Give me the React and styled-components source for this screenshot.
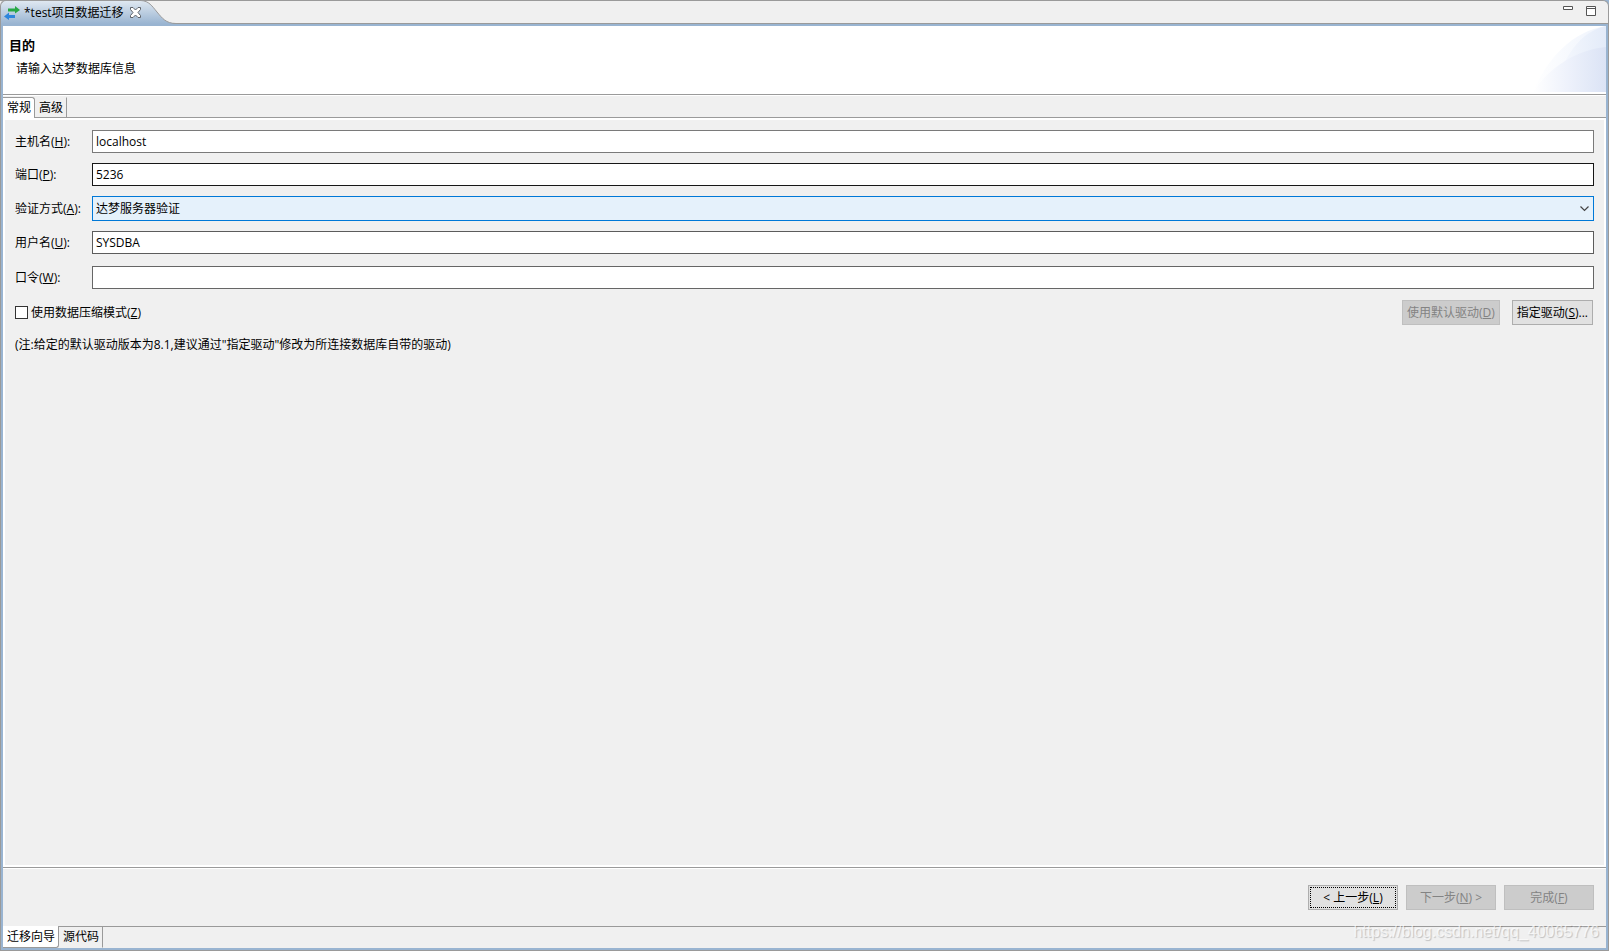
import React, { useState } from "react";
import styled, { createGlobalStyle } from "styled-components";

const GlobalStyle = createGlobalStyle`
  * {
    box-sizing: border-box;
  }
  body {
    margin: 0;
    background-color: #f0f0f0;
  }
  body, button, input, select {
    font-family: "Open Sans", "Noto Sans CJK SC", sans-serif;
    font-size: 12px;
    line-height: 16px;
    color: #000000;
  }
`;

function TransferIcon() {
  return (
    <svg width="16" height="16" viewBox="0 0 16 16" aria-hidden="true">
      <path d="M4 3.5H11V1L16 5L11 8.5V6.5H4Z" fill="#27a844" />
      <path d="M11 10H5V7.5L0 11.5L5 15V13H11Z" fill="#2e86dc" />
    </svg>
  );
}

function CloseIcon() {
  return (
    <svg width="11" height="11" viewBox="0 0 11 11" aria-hidden="true">
      <path
        d="M0.5 0.5H3L5.5 3L8 0.5H10.5V2.5L8 5.5L10.5 8.5V10.5H8L5.5 8L3 10.5H0.5V8.5L3 5.5L0.5 2.5Z"
        fill="#ffffff"
        stroke="#5f6369"
      />
    </svg>
  );
}

function TabCurve() {
  return (
    <svg width="35" height="24" viewBox="0 0 35 24" aria-hidden="true">
      <defs>
        <linearGradient id="tabFill" x1="0" y1="0" x2="0" y2="1">
          <stop offset="0" stopColor="#dfe8f1" />
          <stop offset="1" stopColor="#99b4d1" />
        </linearGradient>
      </defs>
      <path d="M0 0.5C8 1 11 6 16 12C21 18 25 23.5 35 23.5V24H0Z" fill="url(#tabFill)" />
      <path d="M0 0.5C8 1 11 6 16 12C21 18 25 23.5 35 23.5" fill="none" stroke="#9a9a9a" />
    </svg>
  );
}

function BannerArt() {
  return (
    <svg width="75" height="66" viewBox="0 0 75 66" aria-hidden="true">
      <defs>
        <linearGradient id="artOuter" x1="0" y1="0" x2="1" y2="0">
          <stop offset="0" stopColor="#ffffff" />
          <stop offset="1" stopColor="#eef3fc" />
        </linearGradient>
        <linearGradient id="artUpper" x1="0" y1="0" x2="1" y2="0">
          <stop offset="0" stopColor="#f8fafe" />
          <stop offset="1" stopColor="#e3ebf9" />
        </linearGradient>
        <linearGradient id="artLower" x1="0" y1="0" x2="1" y2="0">
          <stop offset="0" stopColor="#ffffff" />
          <stop offset="0.5" stopColor="#edf1fb" />
          <stop offset="1" stopColor="#dbe3f5" />
        </linearGradient>
      </defs>
      <path d="M2 66C16 32 42 5 75 0V66Z" fill="url(#artOuter)" />
      <path d="M22 66C32 32 48 6 75 0V66Z" fill="url(#artUpper)" />
      <path d="M2 66C18 42 44 24 75 21V66Z" fill="url(#artLower)" />
    </svg>
  );
}

function Mnemonic({ text, letter, after = "" }) {
  return (
    <span>
      {text}(<u>{letter}</u>){after}
    </span>
  );
}

function App() {
  const [page, setPage] = useState("general");
  const [view, setView] = useState("wizard");
  const [host, setHost] = useState("localhost");
  const [port, setPort] = useState("5236");
  const [user, setUser] = useState("SYSDBA");
  const [password, setPassword] = useState("");
  const [compress, setCompress] = useState(false);

  return (
    <Window>
      <GlobalStyle />
      <TitleStrip>
        <EditorTab>
          <TransferIcon />
          <span>*test项目数据迁移</span>
          <IconButton aria-label="关闭">
            <CloseIcon />
          </IconButton>
        </EditorTab>
        <TabCurve />
        <WindowControls>
          <IconButton aria-label="最小化">
            <svg width="10" height="10" viewBox="0 0 10 10">
              <path d="M0.5 0.5H9.5V3.5H0.5Z" fill="#ffffff" stroke="#555555" />
            </svg>
          </IconButton>
          <IconButton aria-label="最大化">
            <svg width="10" height="10" viewBox="0 0 10 10">
              <path d="M0.5 0.5H9.5V9.5H0.5ZM0.5 2.5H9.5" fill="#ffffff" stroke="#555555" />
            </svg>
          </IconButton>
        </WindowControls>
      </TitleStrip>

      <Content>
        <Banner>
          <div>
            <h1>目的</h1>
            <p>请输入达梦数据库信息</p>
          </div>
          <BannerArt />
        </Banner>

        <PageTabs>
          <PageTab $active={page === "general"} onClick={() => setPage("general")}>
            常规
          </PageTab>
          <PageTab $active={page === "advanced"} onClick={() => setPage("advanced")}>
            高级
          </PageTab>
        </PageTabs>

        <Panel>
          <Form>
            <label htmlFor="host">
              <Mnemonic text="主机名" letter="H" after=":" />
            </label>
            <TextBox id="host" $edge="#7a7a7a" value={host} onChange={(e) => setHost(e.target.value)} />
            <label htmlFor="port">
              <Mnemonic text="端口" letter="P" after=":" />
            </label>
            <TextBox id="port" $edge="#171717" value={port} onChange={(e) => setPort(e.target.value)} />
            <label htmlFor="auth">
              <Mnemonic text="验证方式" letter="A" after=":" />
            </label>
            <SelectWrap>
              <select id="auth">
                <option>达梦服务器验证</option>
              </select>
              <svg width="9" height="6" viewBox="0 0 9 6" aria-hidden="true">
                <path d="M0.5 0.5L4.5 4.5L8.5 0.5" fill="none" stroke="#444444" strokeWidth="1.2" />
              </svg>
            </SelectWrap>
            <label htmlFor="user">
              <Mnemonic text="用户名" letter="U" after=":" />
            </label>
            <TextBox id="user" $edge="#5c5c5c" value={user} onChange={(e) => setUser(e.target.value)} />
            <label htmlFor="password">
              <Mnemonic text="口令" letter="W" after=":" />
            </label>
            <TextBox
              id="password"
              type="password"
              $edge="#666666"
              value={password}
              onChange={(e) => setPassword(e.target.value)}
            />
          </Form>
          <DriverRow>
            <CheckLabel>
              <input type="checkbox" checked={compress} onChange={(e) => setCompress(e.target.checked)} />
              <Mnemonic text="使用数据压缩模式" letter="Z" />
            </CheckLabel>
            <DriverButtons>
              <Button disabled>
                <Mnemonic text="使用默认驱动" letter="D" />
              </Button>
              <Button>
                <Mnemonic text="指定驱动" letter="S" after="..." />
              </Button>
            </DriverButtons>
          </DriverRow>
          <Note>(注:给定的默认驱动版本为8.1,建议通过"指定驱动"修改为所连接数据库自带的驱动)</Note>
        </Panel>

        <WizardButtons>
          <WizardButton $focused>
            <Mnemonic text="< 上一步" letter="L" />
          </WizardButton>
          <WizardButton disabled>
            <Mnemonic text="下一步" letter="N" after=" >" />
          </WizardButton>
          <WizardButton disabled>
            <Mnemonic text="完成" letter="F" />
          </WizardButton>
        </WizardButtons>

        <ViewTabs>
          <ViewTab $active={view === "wizard"} onClick={() => setView("wizard")}>
            迁移向导
          </ViewTab>
          <ViewTab $active={view === "source"} onClick={() => setView("source")}>
            源代码
          </ViewTab>
        </ViewTabs>
      </Content>
      <Watermark>https://blog.csdn.net/qq_40065776</Watermark>
    </Window>
  );
}

const Window = styled.div`
  position: relative;
  display: flex;
  flex-direction: column;
  min-height: 100vh;
  background-color: #99b4d1;
`;

const TitleStrip = styled.div`
  display: flex;
  height: 24px;
  background-color: #f0f0f0;
  border: 1px solid #9a9a9a;
  border-width: 1px 1px 1px 0;
  border-top-right-radius: 6px;
  > svg {
    flex: none;
    margin-top: -1px;
  }
`;

const EditorTab = styled.div`
  display: flex;
  align-items: center;
  gap: 4px;
  height: 24px;
  margin-top: -1px;
  padding-left: 3px;
  border: 1px solid #9a9a9a;
  border-width: 1px 0 0 1px;
  border-top-left-radius: 6px;
  background-image: linear-gradient(#dfe8f1, #99b4d1);
  white-space: nowrap;
`;

const IconButton = styled.button`
  display: flex;
  padding: 0;
  border: none;
  background-color: transparent;
  ${EditorTab} & {
    margin-left: 2px;
  }
`;

const WindowControls = styled.div`
  display: flex;
  gap: 13px;
  margin-left: auto;
  padding: 5px 12px 0 0;
`;

const Content = styled.main`
  flex: 1;
  display: flex;
  flex-direction: column;
  padding: 2px;
  border: 1px solid #9a9a9a;
  border-top: none;
`;

const Banner = styled.header`
  display: flex;
  justify-content: space-between;
  height: 69px;
  padding-left: 6px;
  background-color: #ffffff;
  border-bottom: 1px solid #9a9a9a;
  h1 {
    margin: 11px 0 0;
    font-size: 13px;
    line-height: 16px;
  }
  p {
    margin: 8px 0 0 7px;
  }
`;

const PageTabs = styled.nav`
  display: flex;
  height: 23px;
  padding-top: 2px;
  background: linear-gradient(#ffffff 1px, #f0f0f0 1px);
  box-shadow: inset 0 -1px #9a9a9a;
`;

const PageTab = styled.button`
  padding: 0 3px 0 4px;
  border: 1px solid transparent;
  border-width: 1px 1px 0 0;
  border-right-color: #9a9a9a;
  background-color: ${({ $active }) => ($active ? "#ffffff" : "transparent")};
  border-top-color: ${({ $active }) => ($active ? "#9a9a9a" : "transparent")};
  border-top-right-radius: ${({ $active }) => ($active ? "3px" : "0")};
`;

const Panel = styled.section`
  flex: 1;
  padding: 10px;
  background-color: #f0f0f0;
  border: 2px solid #ffffff;
`;

const Form = styled.form`
  display: grid;
  grid-template-columns: 77px 1fr;
  grid-template-rows: 23px 23px 25px 23px 27px;
  row-gap: 10px;
  align-items: center;
`;

const TextBox = styled.input`
  width: 100%;
  height: 23px;
  padding: 0 3px;
  border: 1px solid ${({ $edge }) => $edge};
  border-radius: 0;
  background-color: #ffffff;
`;

const SelectWrap = styled.div`
  display: grid;
  align-items: center;
  select {
    grid-area: 1 / 1;
    appearance: none;
    width: 100%;
    height: 25px;
    padding: 0 20px 0 3px;
    border: 1px solid #0078d7;
    border-radius: 0;
    background-color: #e5f1fb;
  }
  svg {
    grid-area: 1 / 1;
    justify-self: end;
    margin-right: 5px;
    pointer-events: none;
  }
`;

const DriverRow = styled.div`
  display: flex;
  align-items: center;
  justify-content: space-between;
  margin-top: 9px;
`;

const CheckLabel = styled.label`
  display: flex;
  align-items: center;
  gap: 3px;
  input {
    appearance: none;
    width: 13px;
    height: 13px;
    margin: 0;
    border: 1px solid #333333;
    background-color: #ffffff;
    &:checked {
      box-shadow: inset 0 0 0 2px #ffffff;
      background-color: #333333;
    }
  }
`;

const DriverButtons = styled.div`
  display: flex;
  gap: 12px;
  padding-right: 1px;
`;

const Button = styled.button`
  height: 25px;
  padding: 0 4px;
  border: 1px solid #adadad;
  background-color: #e1e1e1;
  white-space: pre;
  &:disabled {
    border-color: #bfbfbf;
    background-color: #cccccc;
    color: #838383;
  }
`;

const Note = styled.p`
  margin: 12px 0 0;
`;

const WizardButtons = styled.footer`
  display: flex;
  justify-content: flex-end;
  gap: 8px;
  height: 59px;
  padding: 17px 12px 0 0;
  border-top: 1px solid #9a9a9a;
  background: linear-gradient(#ffffff 1px, #f0f0f0 1px);
`;

const WizardButton = styled(Button)`
  width: 90px;
  outline: ${({ $focused }) => ($focused ? "1px dotted #000000" : "none")};
  outline-offset: -3px;
`;

const ViewTabs = styled.nav`
  display: flex;
  height: 22px;
  background-color: #f0f0f0;
  box-shadow: inset 0 1px #9a9a9a;
`;

const ViewTab = styled.button`
  padding: 0 3px 0 4px;
  border: 1px solid transparent;
  border-width: 0 1px 1px 0;
  border-right-color: #9a9a9a;
  background-color: ${({ $active }) => ($active ? "#ffffff" : "transparent")};
  border-bottom-color: ${({ $active }) => ($active ? "#9a9a9a" : "transparent")};
  border-bottom-right-radius: ${({ $active }) => ($active ? "3px" : "0")};
`;

const Watermark = styled.span`
  position: absolute;
  right: 10px;
  bottom: 9px;
  font-family: "Liberation Sans", sans-serif;
  font-size: 16px;
  line-height: 20px;
  color: rgba(255, 255, 255, 0.7);
  text-shadow: 1px 1px 1px rgba(0, 0, 0, 0.2);
  pointer-events: none;
`;

export default App;
